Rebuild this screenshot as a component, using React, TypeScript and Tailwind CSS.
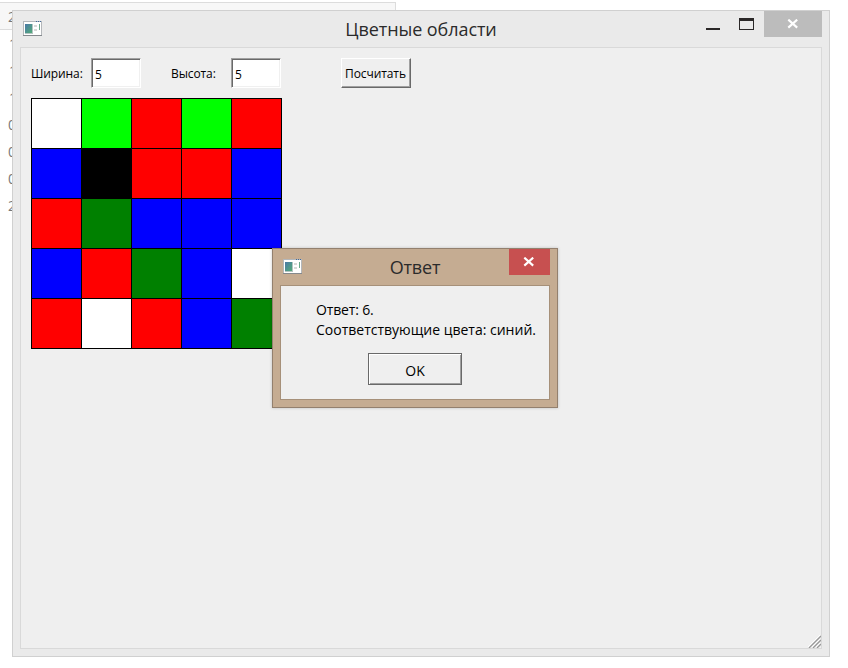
const palette: Record<string, string> = {
  W: "bg-white",
  L: "bg-[#00ff00]",
  R: "bg-[#ff0000]",
  B: "bg-[#0000ff]",
  K: "bg-black",
  G: "bg-[#008000]",
};

const cells = ["WLRLR", "BKRRB", "RGBBB", "BRGBW", "RWRBG"];

const lineNumbers = ["1", "1", "1", "0", "0", "0", "2"];

function AppIcon() {
  return (
    <svg width="19" height="16" viewBox="0 0 19 16" className="block shrink-0" shapeRendering="crispEdges">
      <defs>
        <linearGradient id="pane" x1="0" y1="0" x2="1" y2="1">
          <stop offset="0" stopColor="#4a78a8" />
          <stop offset="1" stopColor="#52ab78" />
        </linearGradient>
      </defs>
      <rect x="0" y="0" width="19" height="15" fill="#b4b7ba" />
      <rect x="0" y="14" width="19" height="1" fill="#85898d" />
      <rect x="1" y="1" width="17" height="13" fill="#fff" />
      <rect x="2" y="3" width="7" height="9" fill="url(#pane)" />
      <rect x="2" y="12" width="8" height="1" fill="#b5c5c1" />
      <rect x="9" y="3" width="1" height="10" fill="#b5c5c1" />
      <rect x="11" y="4" width="3" height="2" fill="#d9d9d9" />
      <rect x="11" y="8" width="3" height="2" fill="#d9d9d9" />
      <rect x="16" y="3" width="1" height="6" fill="#6aa98a" />
      <rect x="13" y="0" width="1" height="1" fill="#426a9b" />
      <rect x="15" y="0" width="1" height="1" fill="#426a9b" />
      <rect x="17" y="0" width="1" height="1" fill="#426a9b" />
    </svg>
  );
}

function CloseGlyph() {
  return (
    <svg width="12" height="10" viewBox="0 0 12 10" className="block">
      <path d="M1.3 .6 L10.2 8.6 M10.2 .6 L1.3 8.6" stroke="#fff" strokeWidth="2.1" />
    </svg>
  );
}

function Field({ label, value }: { label: string; value: string }) {
  return (
    <label className="flex items-center">
      <span className="w-[60px] pt-[2px]">{label}</span>
      <input
        defaultValue={value}
        className="h-[30px] w-[50px] border border-t-[#a0a0a0] border-l-[#a0a0a0] border-r-white border-b-white bg-white pt-[2px] pl-[3px] shadow-[inset_1px_1px_#696969,inset_-1px_-1px_#f0f0f0] outline-none"
      />
    </label>
  );
}

function MainWindow() {
  return (
    <section className="absolute top-[10px] left-[12px] flex h-[647px] w-[818px] flex-col border border-[#d0d0d0] bg-[#eaeaea] px-[7px] pb-[7px]">
      <header className="relative flex h-[36px] shrink-0 justify-between">
        <div className="pt-[10px] pl-[3px]">
          <AppIcon />
        </div>
        <h1 className="absolute inset-x-0 top-[4px] text-center text-[18px] leading-[28px] tracking-[-0.08px] text-[#2b2b2b]">Цветные области</h1>
        <div className="flex">
          <svg width="64" height="26" viewBox="0 0 64 26" shapeRendering="crispEdges">
            <rect x="6" y="17" width="14" height="2" fill="#2b2828" />
            <rect x="39.5" y="7.5" width="14" height="11" fill="none" stroke="#2b2828" />
            <rect x="39" y="7" width="15" height="3" fill="#2b2828" />
          </svg>
          <button className="flex h-[26px] w-[58px] items-center justify-center bg-[#bcbcbc] pr-px pb-px">
            <CloseGlyph />
          </button>
        </div>
      </header>
      <main className="flex grow flex-col border border-[#d9d9d9] bg-[#efefef] pt-[10px] pl-[10px]">
        <div className="flex text-[12px] tracking-[-0.1px] text-black">
          <Field label="Ширина:" value="5" />
          <div className="ml-[30px]">
            <Field label="Высота:" value="5" />
          </div>
          <button className="ml-[60px] h-[30px] w-[70px] border border-t-white border-l-white border-r-[#696969] border-b-[#696969] pt-[2px] pr-px whitespace-nowrap shadow-[inset_-1px_-1px_#a0a0a0]">
            Посчитать
          </button>
        </div>
        <div className="mt-[10px] grid w-[251px] grid-cols-5 gap-px border border-black bg-black">
          {cells.flatMap((row, r) =>
            row.split("").map((c, i) => <div key={`${r}-${i}`} className={`h-[49px] ${palette[c]}`} />)
          )}
        </div>
        <svg width="13" height="13" viewBox="0 0 13 13" className="mt-auto ml-auto block">
          <path d="M0 12 L12 0 M4 12 L12 4 M8 12 L12 8" stroke="#fff" strokeWidth="1" />
          <path d="M1 13 L13 1 M5 13 L13 5 M9 13 L13 9" stroke="#999" strokeWidth="1.3" />
        </svg>
      </main>
    </section>
  );
}

function AnswerDialog() {
  return (
    <section className="absolute top-[248px] left-[272px] flex h-[160px] w-[286px] flex-col border border-[#93806e] bg-[#c5ac92] px-[7px] pb-[7px] shadow-[0_0_3px_rgba(0,0,0,0.2)]">
      <header className="relative flex h-[36px] shrink-0 justify-between">
        <div className="pt-[10px] pl-[3px]">
          <AppIcon />
        </div>
        <h2 className="absolute inset-x-0 top-[4px] text-center text-[18px] leading-[28px] tracking-[-0.2px] text-[#2b2b2b]">Ответ</h2>
        <button className="flex h-[26px] w-[41px] items-center justify-center bg-[#c75050] pr-px pb-px">
          <CloseGlyph />
        </button>
      </header>
      <div className="flex grow flex-col border border-[#a69079] bg-[#efefef] pt-[14px]">
        <p className="pl-[35px] text-[14px] leading-[20px] whitespace-nowrap text-black">
          <span className="block tracking-[-0.15px]">Ответ: 6.</span>
          <span className="block">Соответствующие цвета: синий.</span>
        </p>
        <button className="mt-[13px] ml-[87px] h-[32px] w-[94px] border border-[#696969] pt-[3px] text-[14px] text-black shadow-[inset_1px_1px_#fff,inset_-1px_-1px_#a0a0a0]">
          OK
        </button>
      </div>
    </section>
  );
}

export default function App() {
  return (
    <div className="flex h-[668px] w-[848px] flex-col overflow-hidden bg-white pt-[2px] font-['Open_Sans','Noto_Sans',sans-serif]">
      <div className="flex h-[28px] w-[396px] shrink-0 items-center border-t border-r border-b border-[#dcdcdc] bg-[#f7f7f7] pl-[8px] text-[14px] text-[#777]">2</div>
      <div className="flex flex-col pl-[8px] text-[14px] leading-[27px] text-[#777]">
        {lineNumbers.map((n, i) => (
          <span key={i} className={n === "1" ? "pl-px" : ""}>
            {n}
          </span>
        ))}
      </div>
      <MainWindow />
      <AnswerDialog />
    </div>
  );
}
